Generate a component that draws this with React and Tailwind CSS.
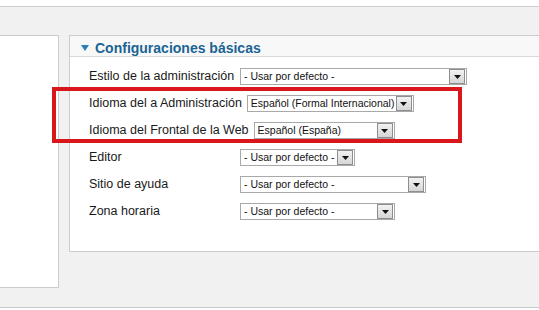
import React from "react";

function Select({ width, text }) {
  return (
    <div
      className="relative flex h-[17px] shrink-0 items-center border border-[#a9a9a9] bg-white"
      style={{ width }}
    >
      <span className="whitespace-nowrap pl-[3px] text-[10.5px] leading-none text-[#111]">{text}</span>
      <div className="absolute right-[1px] top-[0px] flex h-[15px] w-[16px] items-center justify-center border border-[#8e8e8e] bg-gradient-to-b from-[#f2f2f2] to-[#d6d6d6]">
        <svg width="7" height="4" viewBox="0 0 7 4">
          <polygon points="0,0 7,0 3.5,4" fill="#111" />
        </svg>
      </div>
    </div>
  );
}

const rows = [
  ["Estilo de la administración", "- Usar por defecto -", 227],
  ["Idioma del a Administración", "Español (Formal Internacional)", 167],
  ["Idioma del Frontal de la Web", "Español (España)", 141],
  ["Editor", "- Usar por defecto -", 115],
  ["Sitio de ayuda", "- Usar por defecto -", 186],
  ["Zona horaria", "- Usar por defecto -", 155],
];

export default function App() {
  return (
    <div
      className="relative h-[310px] w-[539px] overflow-hidden bg-white"
      style={{ fontFamily: '"Liberation Sans", Arial, sans-serif' }}
    >
      <div className="h-[7px] border-b border-[#cfcfcf] bg-white" />
      <div className="flex h-[301px] gap-[10px] border-b border-[#c8c8c8] bg-[#f1f1f1] pt-[28px]">
        <div className="h-[253px] w-[59px] shrink-0 border-b border-r border-t border-[#cccccc] bg-white" />
        <div className="h-[217px] w-[500px] shrink-0 border border-[#cccccc] bg-white">
          <div className="flex h-[21px] items-center gap-[6px] border-b border-[#d9d9d9] bg-[#f8f8f8] pl-[11px] pt-[3px]">
            <svg width="8" height="6" viewBox="0 0 8 6">
              <polygon points="0,0 8,0 4,6" fill="#2a7fb5" />
            </svg>
            <span className="text-[14px] font-bold leading-none text-[#1b6494]">Configuraciones básicas</span>
          </div>
          <div className="flex flex-col pl-[19px] pt-[6px]">
            {rows.map(([label, text, w]) => (
              <div key={label} className="flex h-[27px] items-center">
                <span className="min-w-[151px] whitespace-nowrap pr-[5px] text-[12.5px] leading-none text-[#1a1a1a]">
                  {label}
                </span>
                <Select width={w} text={text} />
              </div>
            ))}
          </div>
        </div>
      </div>
      <div className="absolute left-[52px] top-[87px] h-[56px] w-[410px] border-[4px] border-[#d9161c]" />
    </div>
  );
}
